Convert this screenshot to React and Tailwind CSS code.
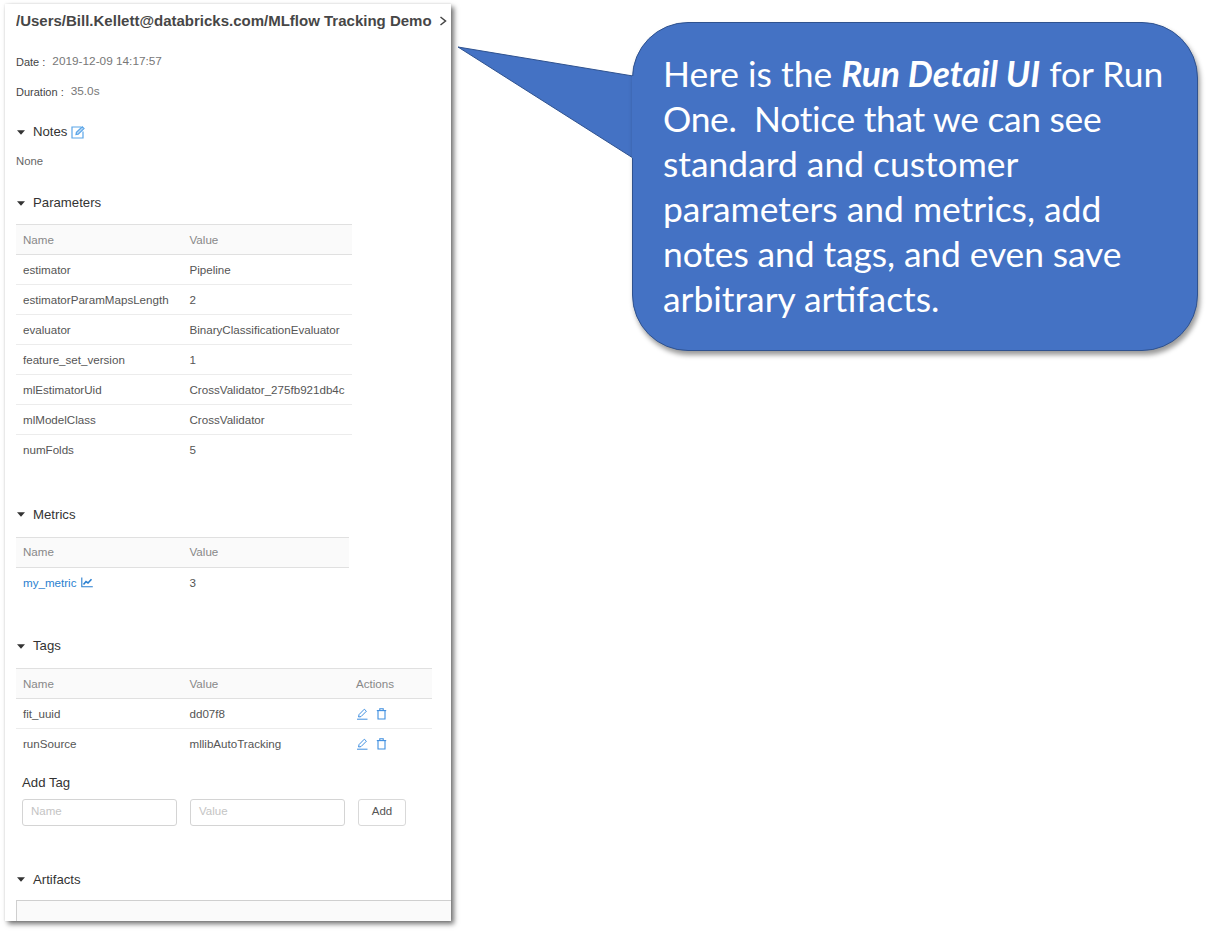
import React from "react";

const Caret = () => (
  <svg width="8" height="5" viewBox="0 0 8 5" className="shrink-0"><path d="M0 0.2H8L4 4.8Z" fill="#333" /></svg>
);

const Section = ({ title, extra, className }) => (
  <div className={"flex items-center h-4 text-[13.2px] text-[#333] " + className}>
    <span className="w-[17px] flex"><span className="ml-[1px] flex"><Caret /></span></span>
    <span>{title}</span>
    {extra}
  </div>
);

const Pencil = () => (
  <svg width="12" height="12" viewBox="0 0 12 12" fill="none" stroke="#3f8fe0" strokeWidth="1">
    <path d="M1 11.2H11.5" />
    <path d="M2.6 9L3 6.6L8.3 1.2L10.4 3.2L5 8.6Z" />
  </svg>
);
const Trash = () => (
  <svg width="11" height="12" viewBox="0 0 11 12" fill="none" stroke="#3f8fe0" strokeWidth="1.1">
    <path d="M0.8 2.6H10.2" />
    <path d="M3.8 2.4V0.8H7.2V2.4" />
    <path d="M2 2.6V11H9V2.6" />
  </svg>
);

const Table = ({ cols, head, rows, className }) => (
  <table className={"table-fixed border-collapse text-[11.6px] text-[#555] " + className}>
    <colgroup>
      {cols.map((w, i) => <col key={i} style={{ width: w }} />)}
    </colgroup>
    <thead>
      <tr className="h-[30px] bg-[#fafafa] border-t border-b border-[#e0e0e0] text-[#888]">
        {head.map((h) => <th key={h} className="text-left font-normal pl-[7px] p-0">{h}</th>)}
      </tr>
    </thead>
    <tbody>
      {rows.map((r, i) => (
        <tr key={i} className={"h-[30px] " + (i < rows.length - 1 ? "border-b border-[#ececec]" : "")}>
          {r.map((c, j) => <td key={j} className="pl-[7px] p-0 whitespace-nowrap">{c}</td>)}
        </tr>
      ))}
    </tbody>
  </table>
);

const actions = (
  <span className="flex items-center gap-[8px]"><Pencil /><Trash /></span>
);

export default function App() {
  return (
    <div className="relative w-[1210px] h-[933px] bg-white overflow-hidden font-['Liberation_Sans',Arial,sans-serif]">
      <div className="ml-[5px] mt-[4px] w-[446px] h-[917px] bg-white overflow-hidden pl-[11px] shadow-[3px_3px_5px_rgba(0,0,0,0.55),0_0_2px_rgba(0,0,0,0.12)] flex flex-col">
        <div className="mt-[9px] h-4 flex items-center justify-between pr-[4px]">
          <span className="text-[15px] font-bold text-[#333] whitespace-nowrap opacity-90">/Users/Bill.Kellett@databricks.com/MLflow Tracking Demo</span>
          <svg width="8" height="10" viewBox="0 0 8 10" fill="none" stroke="#444" strokeWidth="1.5"><path d="M1.5 1L6.5 5L1.5 9" /></svg>
        </div>
        <div className="mt-[25px] h-4 flex items-center text-[11.8px] text-[#777] whitespace-nowrap"><span className="text-[11px] text-[#444] mr-[7px]">Date :</span>2019-12-09 14:17:57</div>
        <div className="mt-[14px] h-4 flex items-center text-[11.8px] text-[#777] whitespace-nowrap"><span className="text-[11px] text-[#444] mr-[7px]">Duration :</span>35.0s</div>
        <Section className="mt-6" title="Notes" extra={
          <svg className="ml-1" width="14" height="13" viewBox="0 0 14 13" fill="none" stroke="#5aa5e8" strokeWidth="1.2">
            <path d="M10 1H1V12H12V5.5" />
            <path d="M5 8.6L5.4 6.4L11.2 0.8L13 2.6L7.2 8.2Z" fill="#b9d8f4" />
          </svg>
        } />
        <div className="mt-[13px] h-4 flex items-center text-[11.3px] text-[#666]">None</div>
        <Section className="mt-[26px]" title="Parameters" />
        <Table
          className="mt-[13px] w-[336px]"
          cols={["166.5px", "169.5px"]}
          head={["Name", "Value"]}
          rows={[
            ["estimator", "Pipeline"],
            ["estimatorParamMapsLength", "2"],
            ["evaluator", "BinaryClassificationEvaluator"],
            ["feature_set_version", "1"],
            ["mlEstimatorUid", "CrossValidator_275fb921db4c"],
            ["mlModelClass", "CrossValidator"],
            ["numFolds", "5"],
          ]}
        />
        <Section className="mt-[42px]" title="Metrics" />
        <Table
          className="mt-[14px] w-[333px]"
          cols={["166.5px", "166.5px"]}
          head={["Name", "Value"]}
          rows={[[
            <span className="flex items-center gap-[5px] text-[#2a7fd0]">my_metric
              <svg width="12" height="11" viewBox="0 0 12 11" fill="none" stroke="#2a7fd0" strokeWidth="1.1">
                <path d="M0.8 0.5V9.8H11.8" />
                <path d="M2.5 7.5L5 4.5L7 6L10.5 2.2" strokeWidth="1.6" />
              </svg>
            </span>,
            "3",
          ]]}
        />
        <Section className="mt-[41px]" title="Tags" />
        <Table
          className="mt-[14px] w-[416px]"
          cols={["166.5px", "166.5px", "83px"]}
          head={["Name", "Value", "Actions"]}
          rows={[
            ["fit_uuid", "dd07f8", actions],
            ["runSource", "mllibAutoTracking", actions],
          ]}
        />
        <div className="mt-4 ml-[6px] h-4 flex items-center text-[13.2px] text-[#333]">Add Tag</div>
        <div className="mt-2 ml-[6px] flex">
          <div className="w-[155px] h-[27px] border border-[#d4d4d4] rounded-[3px] flex items-center pl-2 text-[11.5px] text-[#c4c4c4]">Name</div>
          <div className="ml-[13px] w-[155px] h-[27px] border border-[#d4d4d4] rounded-[3px] flex items-center pl-2 text-[11.5px] text-[#c4c4c4]">Value</div>
          <div className="ml-[13px] w-[48px] h-[27px] border border-[#d9d9d9] rounded-[3px] flex items-center justify-center text-[11.5px] text-[#555]">Add</div>
        </div>
        <Section className="mt-[46px]" title="Artifacts" />
        <div className="mt-[12px] h-6 -mr-2 border-t border-l border-[#cfcfcf] bg-[#fafafa]" />
      </div>

      <svg className="absolute left-[456px] top-[44px]" width="182" height="120" viewBox="0 0 182 120">
        <path d="M2 3L177 32V114Z" fill="#4472c4" stroke="#2f528f" strokeWidth="1" />
      </svg>
      <div className="absolute left-[632px] top-[22px] w-[566px] h-[329px] bg-[#4472c4] border border-[#2f528f] rounded-[56px] shadow-[2px_4px_5px_rgba(0,0,0,0.4)] pl-[30px] pt-[28px] font-['Lato',sans-serif] text-[35.4px] leading-[45px] text-white whitespace-nowrap">
        <div>Here is the <b><i>Run Detail UI</i></b> for Run</div>
        <div className="tracking-[-0.3px]">One.&nbsp; Notice that we can see</div>
        <div>standard and customer</div>
        <div>parameters and metrics, add</div>
        <div className="tracking-[-0.1px]">notes and tags, and even save</div>
        <div>arbitrary artifacts.</div>
      </div>
      <svg className="absolute left-[632px] top-[74px]" width="3" height="86" viewBox="0 0 3 86">
        <rect x="0" y="2" width="3" height="82" fill="#4472c4" />
      </svg>
    </div>
  );
}
